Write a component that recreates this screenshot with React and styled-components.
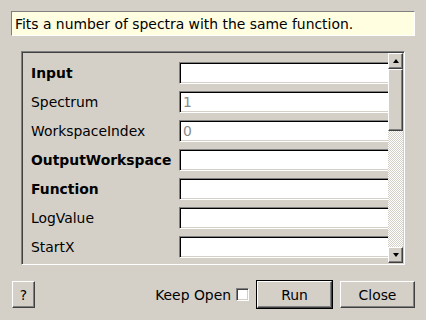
import React from 'react';
import styled, {createGlobalStyle} from 'styled-components';

const Global = createGlobalStyle`
  html, body {
    margin: 0;
    padding: 0;
    background: #d4d0c8;
  }
  body {
    font-family: "DejaVu Sans", "Liberation Sans", sans-serif;
    font-size: 13.9px;
    color: #000;
  }
`;

const Dialog = styled.div`
  width: 426px;
  height: 320px;
  box-sizing: border-box;
  padding: 11px 11px 0 11px;
  display: flex;
  flex-direction: column;
`;

const Info = styled.div`
  height: 25px;
  box-sizing: border-box;
  background: #fffee0;
  border: 1px solid;
  border-color: #808080 #ffffff #ffffff #808080;
  padding: 0 3px;
  display: flex;
  align-items: center;
  white-space: nowrap;
`;

const Panel = styled.div`
  margin: 15px 0 0 10px;
  width: 384px;
  height: 214px;
  box-sizing: border-box;
  border: 1px solid;
  border-color: #808080 #ffffff #ffffff #808080;
  box-shadow: inset 1px 1px #404040, inset -1px -1px #d4d0c8;
  padding: 1px;
  display: flex;
`;

const Content = styled.div`
  flex: 1;
  overflow: hidden;
  padding: 9px 0 0 8px;
  display: flex;
  flex-direction: column;
  gap: 7px;
`;

const Row = styled.div`
  display: grid;
  grid-template-columns: 148px 230px;
  align-items: center;
  height: 22px;
  flex: none;
`;

const Label = styled.span`
  font-weight: ${p => (p.bold ? 'bold' : 'normal')};
  white-space: nowrap;
`;

const Field = styled.div`
  height: 22px;
  box-sizing: border-box;
  background: #fff;
  border: 1px solid;
  border-color: #808080 #ffffff #ffffff #808080;
  box-shadow: inset 1px 1px #000000, inset -1px -1px #d4d0c8;
  padding: 0 3px;
  display: flex;
  align-items: center;
  color: #8a8a8a;
`;

const raised = `
  box-sizing: border-box;
  background: #d4d0c8;
  border: 1px solid;
  border-color: #ffffff #404040 #404040 #ffffff;
  box-shadow: inset -1px -1px #808080;
`;

const ScrollBar = styled.div`
  width: 15px;
  display: flex;
  flex-direction: column;
  flex: none;
`;

const Arrow = styled.div`
  ${raised}
  height: 16px;
  display: flex;
  align-items: center;
  justify-content: center;
  &::after {
    content: '';
    width: 0;
    height: 0;
    border-left: 3.5px solid transparent;
    border-right: 3.5px solid transparent;
    ${p => (p.down ? 'border-top: 4px solid #000;' : 'border-bottom: 4px solid #000;')}
  }
`;

const Thumb = styled.div`
  ${raised}
  height: 62px;
`;

const Track = styled.div`
  flex: 1;
  background: repeating-conic-gradient(#d4d0c8 0 25%, #ffffff 0 50%) 0 0 / 2px 2px;
`;

const Footer = styled.div`
  margin-top: 15px;
  height: 29px;
  display: flex;
  align-items: center;
  padding-left: 1px;
`;

const Button = styled.button`
  ${raised}
  font: inherit;
  color: #000;
  width: ${p => p.w}px;
  height: 27px;
  padding: 0;
  margin-left: ${p => p.gap || 0}px;
`;

const DefaultFrame = styled.div`
  border: 1px solid #000;
  display: flex;
`;

const Spacer = styled.div`
  flex: 1;
`;

const KeepOpen = styled.label`
  display: flex;
  align-items: center;
  gap: 5px;
  margin-right: 7px;
  white-space: nowrap;
`;

const Check = styled.span`
  width: 13px;
  height: 13px;
  box-sizing: border-box;
  background: #fff;
  border: 1px solid;
  border-color: #808080 #ffffff #ffffff #808080;
  box-shadow: inset 1px 1px #404040, inset -1px -1px #d4d0c8;
`;

const rows = [
  {label: 'Input', bold: true},
  {label: 'Spectrum', value: '1'},
  {label: 'WorkspaceIndex', value: '0'},
  {label: 'OutputWorkspace', bold: true},
  {label: 'Function', bold: true},
  {label: 'LogValue'},
  {label: 'StartX'},
];

export default function App() {
  return (
    <Dialog>
      <Global />
      <Info>Fits a number of spectra with the same function.</Info>
      <Panel>
        <Content>
          {rows.map(r => (
            <Row key={r.label}>
              <Label bold={r.bold}>{r.label}</Label>
              <Field>{r.value}</Field>
            </Row>
          ))}
        </Content>
        <ScrollBar>
          <Arrow />
          <Thumb />
          <Track />
          <Arrow down />
        </ScrollBar>
      </Panel>
      <Footer>
        <Button w={23}>?</Button>
        <Spacer />
        <KeepOpen>
          Keep Open
          <Check />
        </KeepOpen>
        <DefaultFrame>
          <Button w={75}>Run</Button>
        </DefaultFrame>
        <Button w={75} gap={7}>Close</Button>
      </Footer>
    </Dialog>
  );
}
